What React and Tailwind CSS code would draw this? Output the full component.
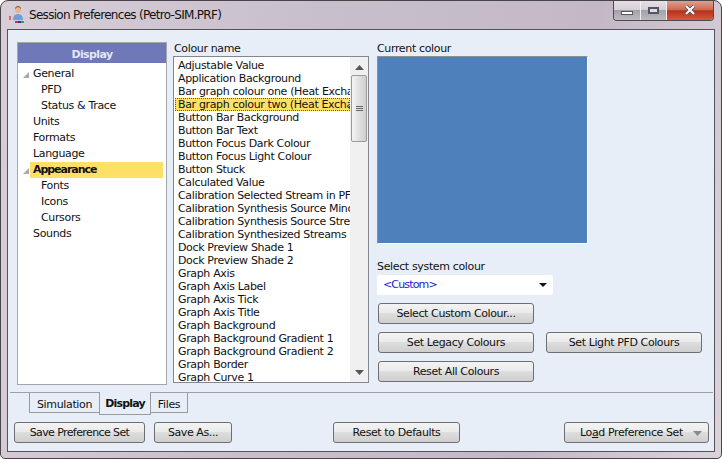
const FONT = "font-['DejaVu_Sans',sans-serif]";

const COLOURS = [
  'Adjustable Value', 'Application Background', 'Bar graph colour one (Heat Exchanger)',
  'Bar graph colour two (Heat Exchanger)', 'Button Bar Background', 'Button Bar Text',
  'Button Focus Dark Colour', 'Button Focus Light Colour', 'Button Stuck', 'Calculated Value',
  'Calibration Selected Stream in PFD', 'Calibration Synthesis Source Minor', 'Calibration Synthesis Source Stream',
  'Calibration Synthesized Streams (PFD)', 'Dock Preview Shade 1', 'Dock Preview Shade 2',
  'Graph Axis', 'Graph Axis Label', 'Graph Axis Tick', 'Graph Axis Title', 'Graph Background',
  'Graph Background Gradient 1', 'Graph Background Gradient 2', 'Graph Border', 'Graph Curve 1',
];

const TREE = [
  { label: 'General', indent: 'pl-[3px]', arrow: true },
  { label: 'PFD', indent: 'pl-[11px]' },
  { label: 'Status & Trace', indent: 'pl-[11px]' },
  { label: 'Units', indent: 'pl-[3px]' },
  { label: 'Formats', indent: 'pl-[3px]' },
  { label: 'Language', indent: 'pl-[3px]' },
  { label: 'Appearance', indent: 'pl-[3px]', arrow: true, active: true },
  { label: 'Fonts', indent: 'pl-[11px]' },
  { label: 'Icons', indent: 'pl-[11px]' },
  { label: 'Cursors', indent: 'pl-[11px]' },
  { label: 'Sounds', indent: 'pl-[3px]' },
];

function Btn({ className = '', children }) {
  return (
    <button className={`h-[21px] shrink-0 pt-[1px] rounded-[3px] border border-[#6f6f6f] bg-[linear-gradient(#f3f3f3_0%,#ebebeb_45%,#dddddd_50%,#cfcfcf_100%)] text-[11px] tracking-[-0.4px] text-[#111] flex items-center justify-center ${className}`}>
      {children}
    </button>
  );
}

function TitleIcon() {
  return (
    <svg width="18" height="20" viewBox="0 0 18 20" className="shrink-0">
      <circle cx="10" cy="5" r="3" fill="#e8b48c" />
      <path d="M7 4 Q10 0 13 4 L13 3 Q10 -1 7 3Z" fill="#7a4a20" />
      <path d="M5 15 Q5 9 10 9 Q15 9 15 15Z" fill="#6f9fd8" />
      <rect x="1" y="11" width="2" height="4" fill="#d66" />
      <rect x="7" y="16" width="3" height="2" fill="#c33" />
      <rect x="10" y="16" width="3" height="2" fill="#33a" />
      <rect x="13" y="16" width="3" height="2" fill="#3a3" />
    </svg>
  );
}

function WindowButtons() {
  const glass = 'bg-[linear-gradient(#e6dfe6_0%,#d6cfd8_45%,#a5a1aa_50%,#bdb9c0_100%)]';
  return (
    <div className="flex h-[20px] self-start border border-t-0 border-[#4d4a50] rounded-b-[4px] overflow-hidden">
      <div className={`w-[27px] flex items-center justify-center border-r border-[#f0eef0] ${glass}`}>
        <div className="w-[12px] h-[4px] mt-[5px] bg-white border border-[#55555f]" />
      </div>
      <div className={`w-[26px] flex items-center justify-center border-r border-[#f0eef0] ${glass}`}>
        <div className="w-[11px] h-[7px] border-2 border-[#55555f] bg-[#dcdce4] mb-[1px]" />
      </div>
      <div className="w-[46px] flex items-center justify-center bg-[linear-gradient(#dda091_0%,#cf6a52_45%,#b5321c_52%,#d45a3e_100%)]">
        <svg width="12" height="10" viewBox="0 0 12 10" className="mb-[1px]">
          <path d="M2 1 L10 9 M10 1 L2 9" stroke="#50505a" strokeWidth="3.6" />
          <path d="M2 1 L10 9 M10 1 L2 9" stroke="#fff" strokeWidth="2" />
        </svg>
      </div>
    </div>
  );
}

function Tree() {
  return (
    <div className="w-[150px] h-[343px] shrink-0 bg-white border border-[#a6a6a6]">
      <div className="h-[20px] pt-[4px] bg-[#6f78b9] flex items-center justify-center text-[11px] font-bold tracking-[-0.6px] text-[#e4e6f4]">Display</div>
      <div className="pt-[3px] pl-[12px]">
        {TREE.map(item => (
          <div key={item.label} className={`relative h-[16px] mr-[3px] flex items-center text-[11px] tracking-[-0.35px] text-[#111] ${item.indent} ${item.active ? 'bg-[#ffe066] font-bold !tracking-[-1.05px]' : ''}`}>
            {item.arrow && (
              <svg width="6" height="6" viewBox="0 0 6 6" className="absolute left-[-7px] top-[6px]">
                <path d="M6 0 V6 H0Z" fill="#a8a8a8" />
              </svg>
            )}
            {item.label}
          </div>
        ))}
      </div>
    </div>
  );
}

function ColourList() {
  return (
    <div className="flex flex-col w-[196px] shrink-0">
      <div className="h-[14px] flex items-center text-[11px] tracking-[-0.35px] text-[#111] pl-[1px]">Colour name</div>
      <div className="h-[327px] border border-[#828790] bg-white flex overflow-hidden">
        <div className="flex-1 min-w-0 pt-[2px] pl-[1px]">
          {COLOURS.map(name => (
            <div key={name} className={`h-[13px] pl-[3px] leading-[13px] whitespace-nowrap overflow-hidden text-[11px] tracking-[-0.35px] text-[#111] ${name.startsWith('Bar graph colour two') ? 'bg-[#ffe066] outline-1 -outline-offset-1 outline-dotted outline-[#555]' : ''}`}>
              {name}
            </div>
          ))}
        </div>
        <div className="w-[18px] shrink-0 bg-[#f0f0f0] flex flex-col items-center">
          <svg width="9" height="5" viewBox="0 0 9 5" className="mt-[8px] mb-[5px]"><path d="M4.5 0 L9 5 H0Z" fill="#555" /></svg>
          <div className="w-[16px] h-[67px] rounded-[2px] border border-[#9a9a9a] bg-[linear-gradient(90deg,#f4f4f4,#dcdcdc_60%,#cfcfcf)] flex flex-col items-center justify-center gap-[1px]">
            <div className="w-[7px] h-px bg-[#666]" />
            <div className="w-[7px] h-px bg-[#666]" />
            <div className="w-[7px] h-px bg-[#666]" />
          </div>
          <svg width="9" height="5" viewBox="0 0 9 5" className="mt-auto mb-[7px]"><path d="M0 0 H9 L4.5 5Z" fill="#555" /></svg>
        </div>
      </div>
    </div>
  );
}

function ColourPanel() {
  return (
    <div className="flex flex-col ml-[8px]">
      <div className="h-[14px] flex items-center text-[11px] tracking-[-0.35px] text-[#111]">Current colour</div>
      <div className="w-[211px] h-[188px] bg-[#4e80bc] border border-[#8a8f98] border-r-white border-b-white" />
      <div className="h-[14px] mt-[16px] flex items-center text-[11px] tracking-[-0.35px] text-[#111]">Select system colour</div>
      <div className="w-[176px] h-[20px] mt-[1px] rounded-[2px] bg-white flex items-center justify-between pl-[6px] pr-[6px] text-[11px] tracking-[-0.85px] text-[#1a1ad0]">
        <span>&lt;Custom&gt;</span>
        <svg width="8" height="4" viewBox="0 0 8 4"><path d="M0 0 H8 L4 4Z" fill="#111" /></svg>
      </div>
      <Btn className="w-[156px] ml-[1px] mt-[8px]">Select Custom Colour...</Btn>
      <div className="flex ml-[1px] mt-[8px] gap-[12px]">
        <Btn className="w-[156px]">Set Legacy Colours</Btn>
        <Btn className="w-[156px]">Set Light PFD Colours</Btn>
      </div>
      <Btn className="w-[156px] ml-[1px] mt-[8px]">Reset All Colours</Btn>
    </div>
  );
}

function Tabs() {
  const tab = 'h-[20px] pt-[5px] flex items-center justify-center border border-t-0 border-[#9a9a9a] text-[11px] tracking-[-0.35px] text-[#111]';
  return (
    <div className="mt-[7px] ml-[2px] mr-[1px] border-t border-[#a0a0a0] h-[20px] pl-[19px] flex items-start">
      <div className={`${tab} w-[71px]`}>Simulation</div>
      <div className="w-[52px] h-[23px] pt-[3px] -ml-px -mt-px bg-[#e8eef8] flex items-center justify-center border border-t-0 border-[#9a9a9a] text-[11px] font-bold tracking-[-0.8px] text-[#111]">Display</div>
      <div className={`${tab} w-[38px] -ml-px`}>Files</div>
    </div>
  );
}

export default function App() {
  return (
    <div className={`${FONT} relative w-[722px] h-[459px] bg-white overflow-hidden`}>
      <div className="w-full h-full rounded-t-[8px] rounded-b-[5px] border border-[#47444a] bg-[linear-gradient(100deg,#d8ced8_0%,#c9bfcb_40%,#c4b8c6_75%,#dcd2dc_100%)] flex flex-col">
        <div className="h-[28px] shrink-0 flex items-start">
          <div className="flex items-center h-[27px] pl-[7px] gap-[3px]">
            <TitleIcon />
            <span className="text-[12px] tracking-[-0.7px] text-[#111]">Session Preferences (Petro-SIM.PRF)</span>
          </div>
          <div className="ml-auto mr-[7px]"><WindowButtons /></div>
        </div>
        <div className="flex-1 mx-[6px] mb-[6px] border border-[#55525a] bg-[#e8eef8] flex flex-col">
          <div className="flex pl-[9px] pt-[12px]">
            <Tree />
            <div className="w-[6px] shrink-0" />
            <ColourList />
            <ColourPanel />
          </div>
          <Tabs />
          <div className="flex pl-[6px] mt-[10px]">
            <Btn className="w-[131px] tracking-[-0.6px]">Save Preference Set</Btn>
            <Btn className="w-[78px] ml-[9px]">Save As...</Btn>
            <Btn className="w-[127px] ml-[101px]">Reset to Defaults</Btn>
            <Btn className="w-[145px] ml-[104px] relative pr-[10px]">
              <span>Lo<span className="underline">a</span>d Preference Set</span>
              <svg width="9" height="5" viewBox="0 0 9 5" className="absolute right-[6px] top-[8px]"><path d="M0 0 H9 L4.5 5Z" fill="#8a8a8a" /></svg>
            </Btn>
          </div>
        </div>
      </div>
    </div>
  );
}
